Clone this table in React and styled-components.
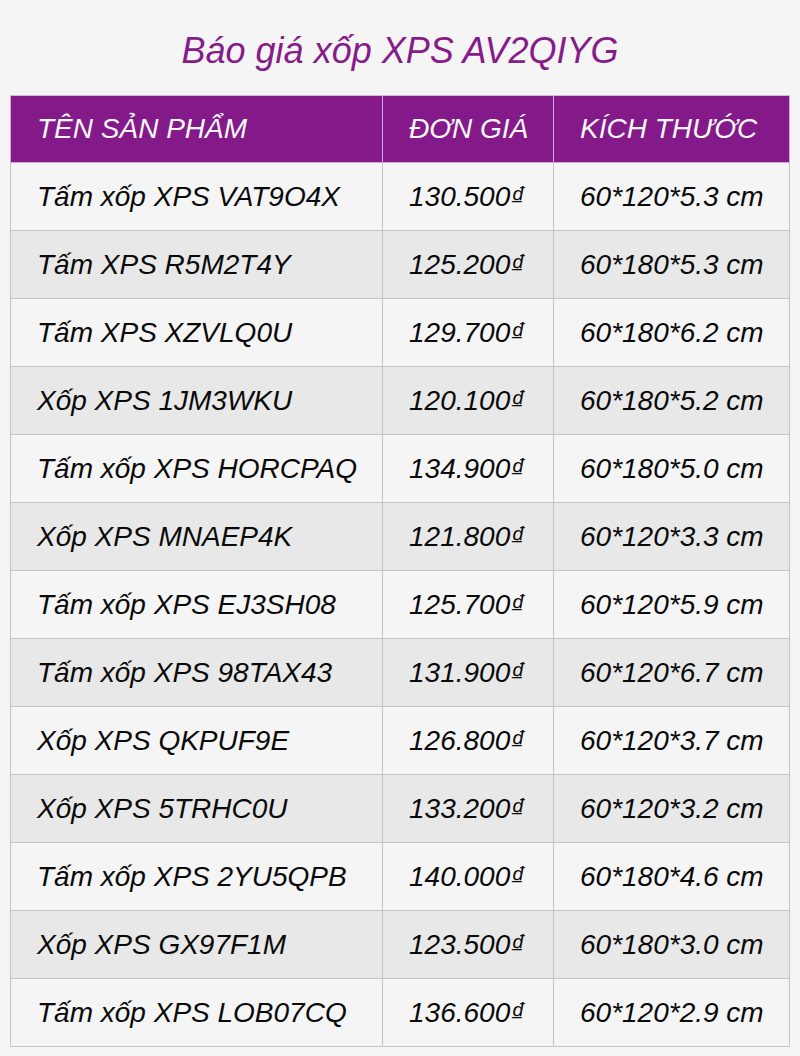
import styled, { createGlobalStyle } from "styled-components";

const GlobalStyle = createGlobalStyle`
  html, body {
    margin: 0;
    padding: 0;
    background: #f5f5f5;
    font-family: "Liberation Sans", Arial, sans-serif;
  }
`;

const products = [
  ["Tấm xốp XPS VAT9O4X", "130.500", "60*120*5.3 cm"],
  ["Tấm XPS R5M2T4Y", "125.200", "60*180*5.3 cm"],
  ["Tấm XPS XZVLQ0U", "129.700", "60*180*6.2 cm"],
  ["Xốp XPS 1JM3WKU", "120.100", "60*180*5.2 cm"],
  ["Tấm xốp XPS HORCPAQ", "134.900", "60*180*5.0 cm"],
  ["Xốp XPS MNAEP4K", "121.800", "60*120*3.3 cm"],
  ["Tấm xốp XPS EJ3SH08", "125.700", "60*120*5.9 cm"],
  ["Tấm xốp XPS 98TAX43", "131.900", "60*120*6.7 cm"],
  ["Xốp XPS QKPUF9E", "126.800", "60*120*3.7 cm"],
  ["Xốp XPS 5TRHC0U", "133.200", "60*120*3.2 cm"],
  ["Tấm xốp XPS 2YU5QPB", "140.000", "60*180*4.6 cm"],
  ["Xốp XPS GX97F1M", "123.500", "60*180*3.0 cm"],
  ["Tấm xốp XPS LOB07CQ", "136.600", "60*120*2.9 cm"],
];

function App() {
  return (
    <Page>
      <GlobalStyle />
      <Title>Báo giá xốp XPS AV2QIYG</Title>
      <PriceTable>
        <colgroup>
          <col style={{ width: 372 }} />
          <col style={{ width: 171 }} />
          <col />
        </colgroup>
        <thead>
          <tr>
            <HeadCell>TÊN SẢN PHẨM</HeadCell>
            <HeadCell>ĐƠN GIÁ</HeadCell>
            <HeadCell>KÍCH THƯỚC</HeadCell>
          </tr>
        </thead>
        <tbody>
          {products.map(([name, price, size], i) => (
            <Row key={name} $odd={i % 2 === 1}>
              <Cell>{name}</Cell>
              <Cell>
                {price}
                <Currency>₫</Currency>
              </Cell>
              <Cell>{size}</Cell>
            </Row>
          ))}
        </tbody>
      </PriceTable>
    </Page>
  );
}

const Page = styled.div`
  padding: 31px 10px 10px;
`;

const Title = styled.h1`
  margin: 0 0 24px;
  text-align: center;
  font-size: 36px;
  font-weight: normal;
  font-style: italic;
  line-height: 40px;
  color: #861b8a;
`;

const PriceTable = styled.table`
  width: 100%;
  border-collapse: collapse;
  table-layout: fixed;
  border: 1px solid #c4c4c4;
`;

const HeadCell = styled.th`
  height: 66px;
  padding: 0 26px;
  background: #84198a;
  color: #f7f7f7;
  text-align: left;
  font-size: 28px;
  font-weight: normal;
  font-style: italic;
  white-space: nowrap;
  border: 1px solid #d8a6db;
  border-top-color: #c4c4c4;
`;

const Row = styled.tr`
  background: ${(p) => (p.$odd ? "#e8e8e8" : "#f5f5f5")};
`;

const Cell = styled.td`
  height: 67px;
  padding: 0 26px;
  border: 1px solid #c4c4c4;
  font-size: 28px;
  font-style: italic;
  color: #0a0a0a;
  white-space: nowrap;
`;

const Currency = styled.span`
  font-size: 28px;
`;

export default App;
